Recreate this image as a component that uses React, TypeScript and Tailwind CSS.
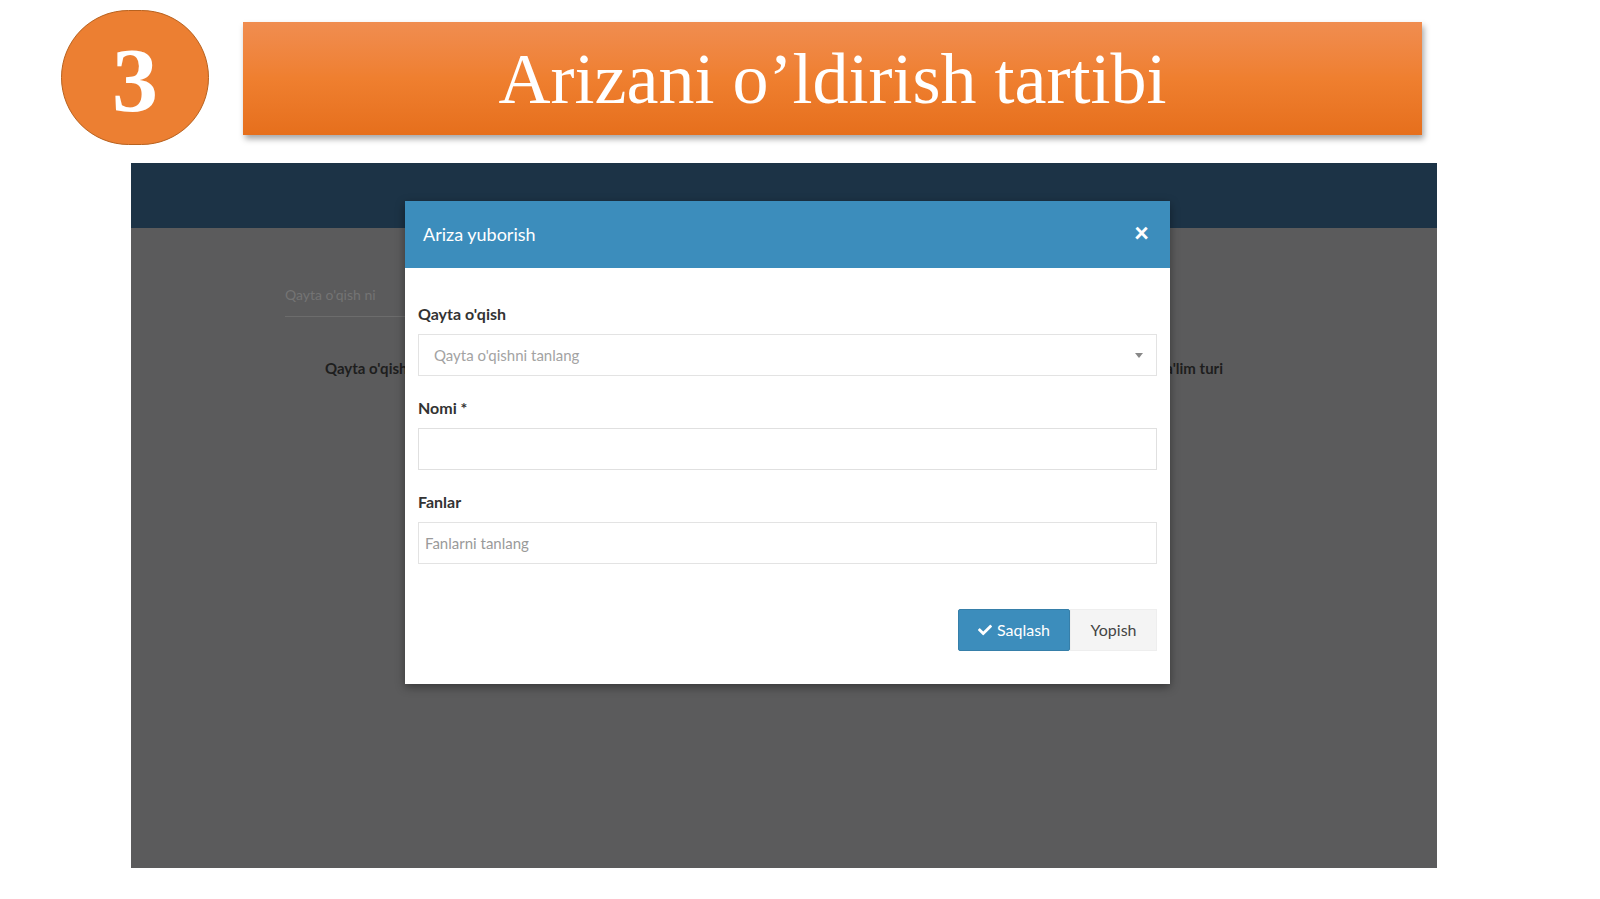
import { FaCheck } from 'react-icons/fa';

const serif = { fontFamily: '"Liberation Serif", "Times New Roman", serif' };
const sans = { fontFamily: 'Lato, "Open Sans", "Liberation Sans", sans-serif' };

export default function App() {
  return (
    <div className="w-[1600px] h-[899px] bg-white overflow-hidden" style={sans}>
      {/* Slide title */}
      <div className="flex items-start pl-[61px] pt-[10px] gap-[34px]">
        <div className="w-[148px] h-[135px] rounded-full bg-[#ec7f32] border border-[#b8621f] flex items-center justify-center shrink-0">
          <span className="text-white font-bold text-[92px] leading-none mt-[4px]" style={serif}>3</span>
        </div>
        <div className="mt-[12px] w-[1179px] h-[113px] bg-gradient-to-b from-[#f08d50] via-[#ef7f2f] to-[#e66f1c] shadow-[2px_4px_6px_rgba(0,0,0,0.35)] flex items-center justify-center">
          <span className="text-white text-[72px] leading-none" style={serif}>Arizani o’ldirish tartibi</span>
        </div>
      </div>

      {/* Screenshot panel */}
      <div className="mt-[18px] ml-[131px] w-[1306px] h-[705px] relative flex flex-col bg-[#5b5b5c]">
        <div className="h-[65px] bg-[#1c3346] shrink-0" />
        <div className="flex-1 flex flex-col">
          <div className="ml-[154px] mt-[54px] w-[120px] border-b border-[#6c6c6c] pb-[10px]">
            <span className="text-[14px] text-[#747474]">Qayta o'qish ni</span>
          </div>
          <div className="mt-[40px] flex">
            <span className="ml-[194px] text-[15px] font-bold text-[#1e1e1e]">Qayta o'qish</span>
            <span className="ml-auto mr-[214px] text-[15px] font-bold text-[#1e1e1e]">Ta'lim turi</span>
          </div>
        </div>

        {/* Modal */}
        <div className="absolute left-[274px] top-[38px] w-[765px] bg-white flex flex-col shadow-[0_3px_9px_rgba(0,0,0,0.4)]">
          <div className="h-[67px] bg-[#3c8dbc] flex items-center justify-between pl-[18px] pr-[21px]">
            <span className="text-white text-[18px]">Ariza yuborish</span>
            <span className="text-white text-[26px] font-black leading-none -mt-[6px]">×</span>
          </div>
          <div className="flex flex-col px-[13px] pt-[36px] pb-[33px]">
            <label className="text-[16px] font-bold text-[#333] leading-[20px]">Qayta o'qish</label>
            <div className="mt-[10px] h-[42px] border border-[#e3e3e3] flex items-center pl-[15px] pr-[13px]">
              <span className="text-[15px] text-[#a3a3a3]">Qayta o'qishni tanlang</span>
              <span className="ml-auto w-0 h-0 border-l-[4px] border-r-[4px] border-t-[5px] border-l-transparent border-r-transparent border-t-[#888]" />
            </div>
            <label className="mt-[22px] text-[16px] font-bold text-[#333] leading-[20px]">Nomi *</label>
            <div className="mt-[10px] h-[42px] border border-[#e0e0e0]" />
            <label className="mt-[22px] text-[16px] font-bold text-[#333] leading-[20px]">Fanlar</label>
            <div className="mt-[10px] h-[42px] border border-[#e3e3e3] flex items-center pl-[6px]">
              <span className="text-[15px] text-[#9a9a9a]">Fanlarni tanlang</span>
            </div>
            <div className="mt-[45px] flex justify-end">
              <button className="h-[42px] w-[112px] bg-[#3c8dbc] border border-[#367fa9] text-white text-[16px] flex items-center justify-center gap-[5px] rounded-[2px]">
                <FaCheck className="w-[14px] h-[14px]" />
                Saqlash
              </button>
              <button className="h-[42px] w-[87px] bg-[#f4f4f4] border border-[#eeeeee] text-[#444] text-[16px] flex items-center justify-center">
                Yopish
              </button>
            </div>
          </div>
        </div>
      </div>
    </div>
  );
}
